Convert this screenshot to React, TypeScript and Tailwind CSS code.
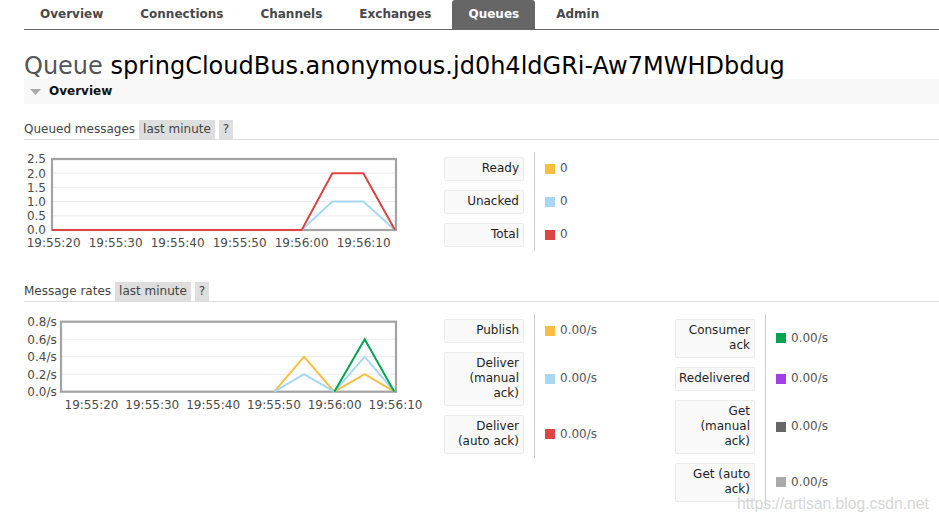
import React from "react";

type Pt = [number, number];
type Series = { color: string; pts: Pt[] };

function Chart(props: {
  w: number;
  h: number;
  x0: number;
  x1: number;
  y0: number;
  y1: number;
  yLabels: { label: string; y: number }[];
  yLabelX: number;
  xTicks: { label: string; x: number }[];
  xLabelY: number;
  grid: number[];
  series: Series[];
}) {
  const { w, h, x0, x1, y0, y1, yLabels, yLabelX, xTicks, xLabelY, grid, series } = props;
  return (
    <svg width={w} height={h} viewBox={`0 0 ${w} ${h}`} className="block">
      {grid.map((g) => (
        <line key={g} x1={x0} x2={x1} y1={g} y2={g} stroke="#ebebeb" strokeWidth={1} />
      ))}
      <rect x={x0} y={y0} width={x1 - x0} height={y1 - y0} fill="none" stroke="#a3a3a3" strokeWidth={2.2} />
      {series.map((s, i) => (
        <polyline
          key={i}
          points={s.pts.map((p) => p.join(",")).join(" ")}
          fill="none"
          stroke={s.color}
          strokeWidth={2}
          strokeLinejoin="miter"
        />
      ))}
      {yLabels.map((l) => (
        <text
          key={l.label}
          x={yLabelX}
          y={l.y + 4.4}
          textAnchor="end"
          fontSize={12}
          fill="#4a4a4a"
          fontFamily="'DejaVu Sans', Verdana, sans-serif"
        >
          {l.label}
        </text>
      ))}
      {xTicks.map((t) => (
        <text
          key={t.label}
          x={t.x}
          y={xLabelY}
          textAnchor="middle"
          fontSize={12}
          fill="#4a4a4a"
          fontFamily="'DejaVu Sans', Verdana, sans-serif"
        >
          {t.label}
        </text>
      ))}
    </svg>
  );
}

const times = ["19:55:20", "19:55:30", "19:55:40", "19:55:50", "19:56:00", "19:56:10"];

const YELLOW = "#f7bf41";
const BLUE = "#a6d8f5";
const RED = "#de4444";
const GREEN = "#00a551";

function LegendRow({ lines, color, value }: { lines: string[]; color: string; value: string }) {
  return (
    <div className="flex">
      <div className="w-[91px] pr-[10px] py-[4.5px] border-r border-[#cccccc]">
        <div className="w-[80px] rounded-[2px] border border-[#ececec] bg-[#f9f9f9] pr-[4px] py-[3.5px] text-right leading-[15px] text-[#1e1e1e]">
          {lines.map((l) => (
            <div key={l} className="whitespace-nowrap">
              {l}
            </div>
          ))}
        </div>
      </div>
      <div className="w-[140px] pl-[10px] flex items-center gap-[5px] text-[#555]">
        <span className="w-[10px] h-[10px] shrink-0" style={{ backgroundColor: color }} />
        <span className="leading-[15px]">{value}</span>
      </div>
    </div>
  );
}

function SubHeader({ title }: { title: string }) {
  return (
    <div className="flex h-[20px] border-b border-[#dddddd] text-[#444]">
      <span className="self-center leading-[15px]">{title}</span>
      <span className="ml-[4px] h-[19px] bg-[#dedede] px-[4px] flex items-center leading-[15px]">last minute</span>
      <span className="ml-[4px] h-[19px] bg-[#dedede] px-[4px] flex items-center leading-[15px]">?</span>
    </div>
  );
}

export default function App() {
  const tabs = ["Overview", "Connections", "Channels", "Exchanges", "Queues", "Admin"];

  const c1Step = 14.2;
  const c1Y = (v: number) => 78 - (v / 0.5) * c1Step;
  const c2Y = (v: number) => 77.7 - (v / 0.2) * 17.5;

  return (
    <div className="relative w-[939px] min-h-[521px] bg-white text-[12px] font-['DejaVu_Sans',Verdana,sans-serif]">
      {/* nav */}
      <div className="ml-[24px] flex gap-[5px] h-[30px] border-b border-[#666]">
        {tabs.map((t) => (
          <div
            key={t}
            className={
              t === "Queues"
                ? "px-4 pt-[7px] leading-[15px] font-bold text-white bg-[#666] rounded-t-[3px]"
                : "px-4 pt-[7px] leading-[15px] font-bold text-[#484848]"
            }
          >
            {t}
          </div>
        ))}
      </div>

      <div className="pl-[24px]">
        <h1 className="mt-[23px] text-[24px] leading-[26px] font-normal text-black whitespace-nowrap">
          <span className="text-[#555]">Queue</span> springCloudBus.anonymous.jd0h4ldGRi-Aw7MWHDbdug
        </h1>

        <div className="h-[25px] bg-[#f8f8f8] flex items-center">
          <svg width="11" height="6" viewBox="0 0 11 6" className="ml-[6px]">
            <polygon points="0,0 11,0 5.5,6" fill="#aaaaaa" />
          </svg>
          <span className="ml-[8px] font-bold text-[#111] leading-[15px]">Overview</span>
        </div>

        <div className="mt-[16px]">
          <SubHeader title="Queued messages" />
        </div>

        <div className="mt-[12px] flex">
          <div className="w-[420px]">
            <Chart
              w={420}
              h={100}
              x0={28}
              x1={372}
              y0={7}
              y1={78}
              yLabelX={22}
              yLabels={["2.5", "2.0", "1.5", "1.0", "0.5", "0.0"].map((l) => ({ label: l, y: c1Y(parseFloat(l)) }))}
              grid={[0.5, 1, 1.5, 2].map(c1Y)}
              xTicks={times.map((t, i) => ({ label: t, x: 29.7 + 62 * i }))}
              xLabelY={95}
              series={[
                { color: BLUE, pts: [[277.7, 78], [308.3, c1Y(1)], [339.3, c1Y(1)], [371, 78]] },
                { color: RED, pts: [[28, 78], [277.7, 78], [308.3, c1Y(2)], [339.3, c1Y(2)], [371, 78]] },
              ]}
            />
          </div>
          <div>
            <LegendRow lines={["Ready"]} color={YELLOW} value="0" />
            <LegendRow lines={["Unacked"]} color={BLUE} value="0" />
            <LegendRow lines={["Total"]} color={RED} value="0" />
          </div>
        </div>

        <div className="mt-[30px]">
          <SubHeader title="Message rates" />
        </div>

        <div className="mt-[12px] flex items-start">
          <div className="w-[420px]">
            <Chart
              w={420}
              h={100}
              x0={37}
              x1={372}
              y0={7.7}
              y1={77.7}
              yLabelX={32.7}
              yLabels={["0.8", "0.6", "0.4", "0.2", "0.0"].map((l) => ({ label: `${l}/s`, y: c2Y(parseFloat(l)) }))}
              grid={[0.2, 0.4, 0.6].map(c2Y)}
              xTicks={times.map((t, i) => ({ label: t, x: 67.5 + 60.8 * i }))}
              xLabelY={94.7}
              series={[
                { color: YELLOW, pts: [[250.3, 77.7], [280, c2Y(0.4)], [310.3, 77.7], [340.7, c2Y(0.2)], [370.3, 77.7]] },
                { color: BLUE, pts: [[250.3, 77.7], [280, c2Y(0.2)], [310.3, 77.7], [340.7, c2Y(0.4)], [370.3, 77.7]] },
                { color: GREEN, pts: [[310.3, 77.7], [340.7, c2Y(0.6)], [370.3, 77.7]] },
              ]}
            />
          </div>
          <div>
            <LegendRow lines={["Publish"]} color={YELLOW} value="0.00/s" />
            <LegendRow lines={["Deliver", "(manual", "ack)"]} color={BLUE} value="0.00/s" />
            <LegendRow lines={["Deliver", "(auto ack)"]} color={RED} value="0.00/s" />
          </div>
          <div>
            <LegendRow lines={["Consumer", "ack"]} color={GREEN} value="0.00/s" />
            <LegendRow lines={["Redelivered"]} color="#a040e6" value="0.00/s" />
            <LegendRow lines={["Get", "(manual", "ack)"]} color="#666666" value="0.00/s" />
            <LegendRow lines={["Get (auto", "ack)"]} color="#aaaaaa" value="0.00/s" />
          </div>
        </div>

        <div className="mt-[16px] leading-[15px] text-[#444]">Details</div>
      </div>

      <div className="absolute left-[737px] top-[495px] text-[15.7px] leading-[18px] text-[#d6d6d6] font-['Liberation_Sans',Arial,sans-serif] whitespace-nowrap">
        https://artisan.blog.csdn.net
      </div>
    </div>
  );
}
